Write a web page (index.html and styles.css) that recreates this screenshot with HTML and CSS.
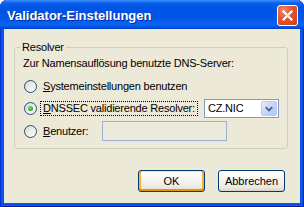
FILE: index.html
```html
<!DOCTYPE html>
<html lang="de">
<head>
<meta charset="utf-8">
<title>Validator-Einstellungen</title>
<link rel="stylesheet" href="styles.css">
</head>
<body>
<div class="window">
  <div class="titlebar">
    <span class="title">Validator-Einstellungen</span>
    <span class="close">
      <svg width="19" height="19" viewBox="0 0 19 19"><path d="M5.5 5.5 L13.5 13.5 M13.5 5.5 L5.5 13.5" stroke="#fff" stroke-width="2.2" stroke-linecap="square"/></svg>
    </span>
  </div>
  <div class="client">
    <fieldset class="group">
      <legend class="group-label">Resolver</legend>
      <div class="intro">Zur Namensauflösung benutzte DNS-Server:</div>
      <div class="row row-first">
        <span class="radio"></span>
        <span class="label"><u>S</u>ystemeinstellungen benutzen</span>
      </div>
      <div class="row row-second">
        <span class="radio"><span class="dot"></span></span>
        <span class="label focus"><u>D</u>NSSEC validierende Resolver:</span>
        <div class="combo">
          <span class="combo-text">CZ.NIC</span>
          <span class="combo-btn">
            <svg width="15" height="15" viewBox="0 0 15 15"><path d="M4 6 L7.5 9.5 L11 6" fill="none" stroke="#4d6185" stroke-width="2"/></svg>
          </span>
        </div>
      </div>
      <div class="row row-third">
        <span class="radio"></span>
        <span class="label"><u>B</u>enutzer:</span>
        <div class="edit"></div>
      </div>
    </fieldset>
    <div class="buttons">
      <button class="btn btn-default">OK</button>
      <button class="btn">Abbrechen</button>
    </div>
  </div>
</div>
</body>
</html>
```
FILE: styles.css
```css
html, body {
  margin: 0;
  padding: 0;
  background: #ffffff;
}
body {
  font-family: "Liberation Sans", Arial, sans-serif;
  font-size: 11px;
  letter-spacing: -0.2px;
  color: #000;
}
.window {
  width: 304px;
  height: 207px;
  display: flex;
  flex-direction: column;
  background: #0a55e3;
  border-radius: 7px 7px 0 0;
  box-shadow: inset 1px 0 #0831d9, inset -1px 0 #0020a8, inset 0 -1px #0020a8;
  overflow: hidden;
}
.titlebar {
  height: 29px;
  flex: none;
  display: flex;
  align-items: flex-start;
  padding: 5px 6px 0 7px;
  box-sizing: border-box;
  background: linear-gradient(to bottom, #3d8ffb 0, #0a62ee 3px, #0055e5 7px, #0053e3 16px, #0a62f0 24px, #0560ee 26px, #0048d4 28px, #0040c8 29px);
  border-radius: 7px 7px 0 0;
}
.title {
  flex: 1;
  font-family: "Liberation Sans", Arial, sans-serif;
  font-weight: bold;
  font-size: 13px;
  letter-spacing: 0;
  line-height: 21px;
  color: #fff;
  text-shadow: 1px 1px 0 #0a2a9a;
}
.close {
  width: 21px;
  height: 21px;
  box-sizing: border-box;
  border: 1px solid #fff;
  border-radius: 3px;
  background: radial-gradient(circle at 30% 25%, #ee8a6a 0, #e05a35 40%, #cc3d16 100%);
  display: flex;
  align-items: center;
  justify-content: center;
}
.close svg { display: block; }
.client {
  flex: 1;
  margin: 0 4px 4px 4px;
  background: #ece9d8;
  display: flex;
  flex-direction: column;
  padding-top: 12px;
}
.group {
  margin: 0 12px 0 10px;
  padding: 3px 8px 7px 8px;
  border: 1px solid #d0d0bf;
  border-radius: 3px;
  display: flex;
  flex-direction: column;
}
.group-label {
  padding: 0 2px;
  margin-left: -3px;
  line-height: 13px;
  color: #000;
}
.intro {
  line-height: 13px;
}
.row {
  height: 20px;
  display: flex;
  align-items: center;
}
.row-first { margin-top: 6px; }
.row-second { margin-top: 2px; }
.row-third { margin-top: 3px; }
.radio {
  width: 13px;
  height: 13px;
  box-sizing: border-box;
  flex: none;
  margin-left: 1px;
  border-radius: 50%;
  border: 1px solid #1c5180;
  background: linear-gradient(135deg, #d8d7cd 0, #f0efe9 55%, #ffffff 100%);
  display: flex;
  align-items: center;
  justify-content: center;
}
.dot {
  width: 5px;
  height: 5px;
  border-radius: 50%;
  background: radial-gradient(circle at 40% 35%, #7be07a 0, #2fae2d 60%, #21a121 100%);
}
.label {
  margin-left: 4px;
  padding: 1px 2px;
  line-height: 11px;
  white-space: nowrap;
}
.focus {
  outline: 1px dotted #000;
  outline-offset: 0;
}
.combo {
  margin-left: auto;
  width: 75px;
  height: 19px;
  box-sizing: border-box;
  border: 1px solid #7f9db9;
  background: #fff;
  display: flex;
  align-items: center;
  padding-right: 1px;
}
.combo-text {
  flex: 1;
  padding-left: 3px;
  font-size: 11px;
  line-height: 13px;
}
.combo-btn {
  width: 16px;
  height: 15px;
  box-sizing: border-box;
  border: 1px solid #b9c9f3;
  border-radius: 2px;
  background: linear-gradient(135deg, #e3ebfe 0, #c6d5fb 50%, #b2c6f7 100%);
  display: flex;
  align-items: center;
  justify-content: center;
}
.combo-btn svg { display: block; }
.edit {
  margin-left: auto;
  margin-right: 52px;
  width: 125px;
  height: 20px;
  box-sizing: border-box;
  border: 1px solid #9cb0d6;
  background: #ebeadb;
}
.buttons {
  display: flex;
  justify-content: flex-end;
  gap: 13px;
  margin: 21px 15px 0 0;
}
.btn {
  width: 67px;
  height: 22px;
  box-sizing: border-box;
  border: 1px solid #003c74;
  border-radius: 3px;
  background: linear-gradient(to bottom, #ffffff 0, #f4f3ee 50%, #e9e7df 85%, #d6d0c5 100%);
  font-family: "Liberation Sans", Arial, sans-serif;
  font-size: 11px;
  letter-spacing: 0;
  color: #000;
  padding: 0;
  line-height: 18px;
}
.btn-default {
  box-shadow: inset 0 -2px #e59700, inset 2px 0 #f8b330, inset -2px 0 #f8b330, inset 0 1px #fee5a0;
}
```
